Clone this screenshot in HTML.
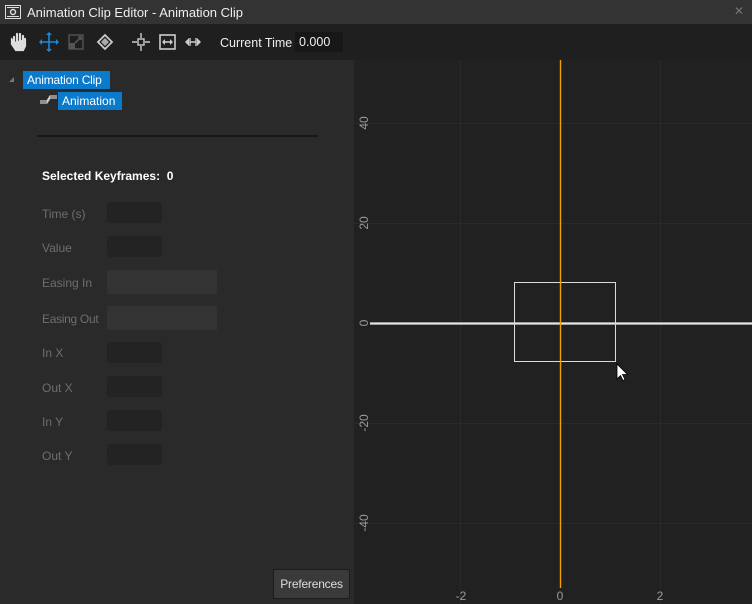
<!DOCTYPE html>
<html><head><style>
*{margin:0;padding:0;box-sizing:border-box}
body{width:752px;height:604px;background:#2a2a2a;font-family:"Liberation Sans",sans-serif;font-size:12px;color:#fff;position:relative;overflow:hidden}
.a{position:absolute;white-space:nowrap}
.lbl{position:absolute;left:42px;color:#6e6e6e;font-size:12px;white-space:nowrap}
.box{position:absolute;left:107px;width:55px;height:21px;background:#232323;border-radius:3px}
.wide{position:absolute;left:107px;width:110px;height:24px;background:#333}
</style></head><body>
<div class="a" style="left:0;top:0;width:752px;height:24px;background:#333"></div>
<svg class="a" style="left:5px;top:5px" width="16" height="14"><rect x="0.5" y="0.5" width="15" height="13" fill="none" stroke="#ddd"/><rect x="2" y="2" width="12" height="1" fill="#ddd"/><rect x="2" y="11" width="12" height="1" fill="#ddd"/><circle cx="8" cy="7" r="2.5" fill="none" stroke="#ddd" stroke-width="1.4"/></svg>
<div class="a" style="left:27px;top:5px;font-size:13px;color:#eee">Animation Clip Editor - Animation Clip</div>
<div class="a" style="left:734px;top:4px;color:#777;font-size:12px">✕</div>
<div class="a" style="left:0;top:24px;width:752px;height:36px;background:#1f1f1f"></div>
<svg class="a" style="left:10px;top:32px" width="200" height="20">
<path d="M4 10V5M7 10V2M10 10V2M13 10V4M4 10l-2-2v4l4 6h7l2-4V7" fill="#ddd" stroke="#ddd" stroke-width="2.2" stroke-linecap="round"/>
<g fill="#1e88d8" stroke="#1e88d8" stroke-width="1.6"><path d="M31 10h16M39 2v16" /><path d="M29 10l3-3v6zM49 10l-3-3v6zM39 0l-3 3h6zM39 20l-3-3h6z" stroke="none"/></g>
<rect x="59" y="3" width="14" height="14" fill="none" stroke="#555" stroke-width="1.4"/><rect x="59" y="11" width="6" height="6" fill="#555"/><path d="M65 11l6-6M68 5h3v3" stroke="#555" stroke-width="1.6" fill="none"/>
<path d="M95 3l7 7-7 7-7-7z" fill="none" stroke="#ccc" stroke-width="1.8"/><path d="M95 6l4 4-4 4-4-4z" fill="#aaa"/>
<path d="M122 10h5M135 10h5M131 1v5M131 14v5" stroke="#ccc" stroke-width="1.4"/><rect x="128" y="7" width="6" height="6" fill="none" stroke="#ccc" stroke-width="1.4"/>
<rect x="150" y="3" width="15" height="14" fill="none" stroke="#ccc" stroke-width="1.6"/><path d="M153 10h9" stroke="#ccc" stroke-width="1.6"/><path d="M152 10l3-3v6zM163 10l-3-3v6z" fill="#ccc"/>
<path d="M175 10l4-4v8zM191 10l-4-4v8z" fill="#ccc"/><path d="M180 6v8M186 6v8M180 10h6" stroke="#ccc" stroke-width="1.4"/>
</svg>
<div class="a" style="left:220px;top:36px;font-size:12.5px;color:#eee">Current Time</div>
<div class="a" style="left:295px;top:32px;width:48px;height:20px;background:#171717;border-radius:2px;color:#eee;padding:3px 4px;font-size:12.5px">0.000</div>
<div class="a" style="left:9px;top:77px;width:0;height:0;border-left:5px solid transparent;border-bottom:5px solid #777"></div>
<div class="a" style="left:23px;top:71px;width:87px;height:18px;background:#0a7acc;color:#fff;font-size:12px;padding:2px 4px;letter-spacing:-0.2px">Animation Clip</div>
<svg class="a" style="left:40px;top:94px" width="18" height="10"><path d="M0 7h7l3-5h7M0 9h7l3-5h7" stroke="#ccc" stroke-width="1.3" fill="none"/></svg>
<div class="a" style="left:58px;top:92px;width:64px;height:18px;background:#0a7acc;color:#fff;font-size:12px;padding:2px 4px">Animation</div>
<div class="a" style="left:37px;top:135px;width:281px;height:2px;background:#181818"></div>
<div class="a" style="left:42px;top:169px;font-weight:bold;font-size:12px;color:#fff">Selected Keyframes:&nbsp; 0</div>
<div class="lbl" style="top:207px">Time (s)</div><div class="box" style="top:202px"></div>
<div class="lbl" style="top:241px">Value</div><div class="box" style="top:236px"></div>
<div class="lbl" style="top:276px">Easing In</div><div class="wide" style="top:270px"></div>
<div class="lbl" style="top:312px;letter-spacing:-0.3px">Easing Out</div><div class="wide" style="top:306px"></div>
<div class="lbl" style="top:346px">In X</div><div class="box" style="top:342px"></div>
<div class="lbl" style="top:381px">Out X</div><div class="box" style="top:376px"></div>
<div class="lbl" style="top:415px">In Y</div><div class="box" style="top:410px"></div>
<div class="lbl" style="top:449px">Out Y</div><div class="box" style="top:444px"></div>
<div class="a" style="left:273px;top:569px;width:77px;height:30px;background:#3a3a3a;border:1px solid #1c1c1c;border-radius:2px;color:#ddd;font-size:12px;text-align:center;line-height:28px;letter-spacing:-0.2px">Preferences</div>
<svg class="a" style="left:354px;top:60px" width="398" height="544">
<rect width="398" height="544" fill="#212121"/>
<g stroke="#2a2a2a" stroke-width="1"><path d="M106.5 0v544M306.5 0v544M0 63.5h398M0 163.5h398M0 363.5h398M0 463.5h398"/></g>
<path d="M16 263.5h382" stroke="#e6e6e6" stroke-width="2.2"/>
<rect x="160.5" y="222.5" width="101" height="79" fill="none" stroke="#dcdcdc" stroke-width="1"/>
<path d="M206.5 0v528" stroke="#f0a000" stroke-width="1.4"/>
<path d="M263 304v15l3.5-3.5 2.5 5 2-1-2.5-5h5z" fill="#fff" stroke="#000" stroke-width="0.8"/>
<g fill="#9a9a9a" font-family="Liberation Sans" font-size="12">
<text x="107" y="540" text-anchor="middle">-2</text><text x="206" y="540" text-anchor="middle">0</text><text x="306" y="540" text-anchor="middle">2</text>
<text transform="translate(14,63) rotate(-90)" text-anchor="middle">40</text>
<text transform="translate(14,163) rotate(-90)" text-anchor="middle">20</text>
<text transform="translate(14,263) rotate(-90)" text-anchor="middle">0</text>
<text transform="translate(14,363) rotate(-90)" text-anchor="middle">-20</text>
<text transform="translate(14,463) rotate(-90)" text-anchor="middle">-40</text>
</g></svg>
</body></html>
